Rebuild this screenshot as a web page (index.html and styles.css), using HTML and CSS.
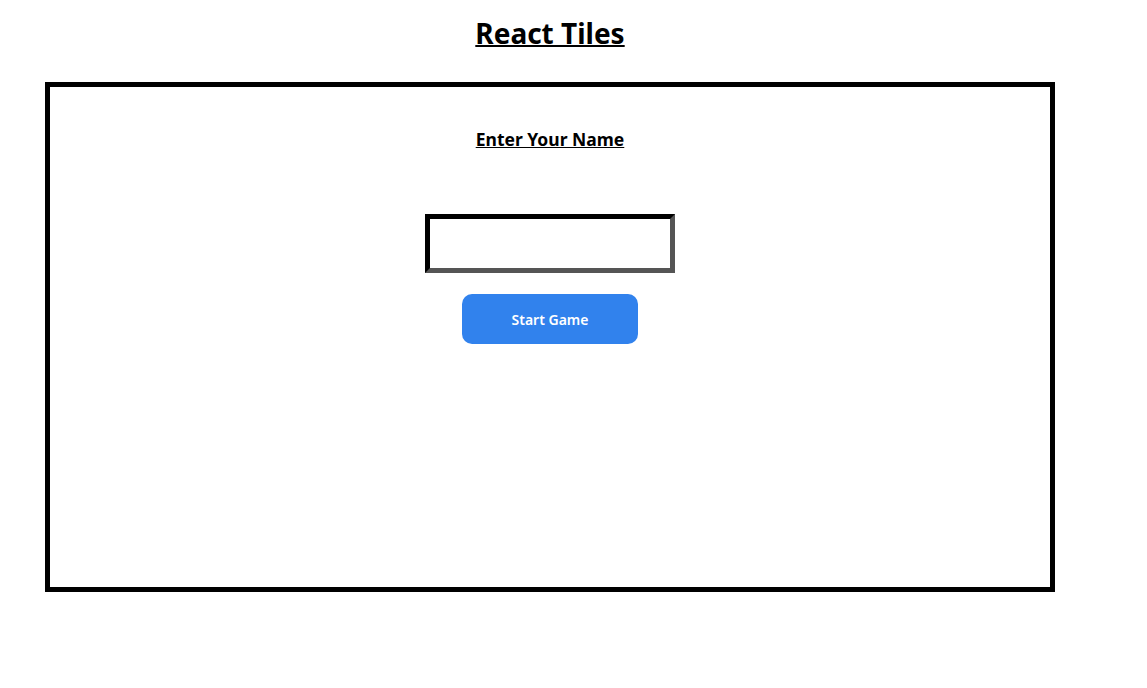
FILE: index.html
```html
<!DOCTYPE html>
<html>
<head>
<meta charset="utf-8">
<link rel="stylesheet" href="styles.css">
<title>React Tiles</title>
</head>
<body>
<div class="page">
  <h1 class="title">React Tiles</h1>
  <div class="board">
    <h3 class="prompt">Enter Your Name</h3>
    <input class="name-input" type="text">
    <button class="start-btn">Start Game</button>
  </div>
</div>
</body>
</html>
```
FILE: styles.css
```css
body {
  margin: 0;
  background: #fff;
  font-family: "Noto Sans", "Open Sans", sans-serif;
  color: #000;
}
.page {
  width: 1100px;
  display: flex;
  flex-direction: column;
  align-items: center;
}
.title {
  margin: 13px 0 0 0;
  font-size: 28px;
  line-height: 40px;
  font-weight: 700;
  text-decoration: underline;
  text-decoration-thickness: 2px;
}
.board {
  box-sizing: border-box;
  width: 1010px;
  height: 510px;
  margin-top: 29px;
  border: 5px solid #000;
  display: flex;
  flex-direction: column;
  align-items: center;
}
.prompt {
  margin: 39px 0 0 0;
  font-size: 17.5px;
  line-height: 26px;
  font-weight: 700;
  text-decoration: underline;
}
.name-input {
  box-sizing: border-box;
  width: 250px;
  height: 59px;
  margin-top: 62px;
  border-width: 5px;
  border-style: solid;
  border-color: #000 #555 #555 #000;
  padding: 0 6px;
  font-family: inherit;
  font-size: 16px;
  outline: none;
}
.start-btn {
  box-sizing: border-box;
  width: 176px;
  height: 50px;
  margin-top: 21px;
  border: none;
  border-radius: 10px;
  background: #3182ed;
  color: #fff;
  font-family: inherit;
  font-size: 14px;
  font-weight: 600;
  cursor: pointer;
}
```
